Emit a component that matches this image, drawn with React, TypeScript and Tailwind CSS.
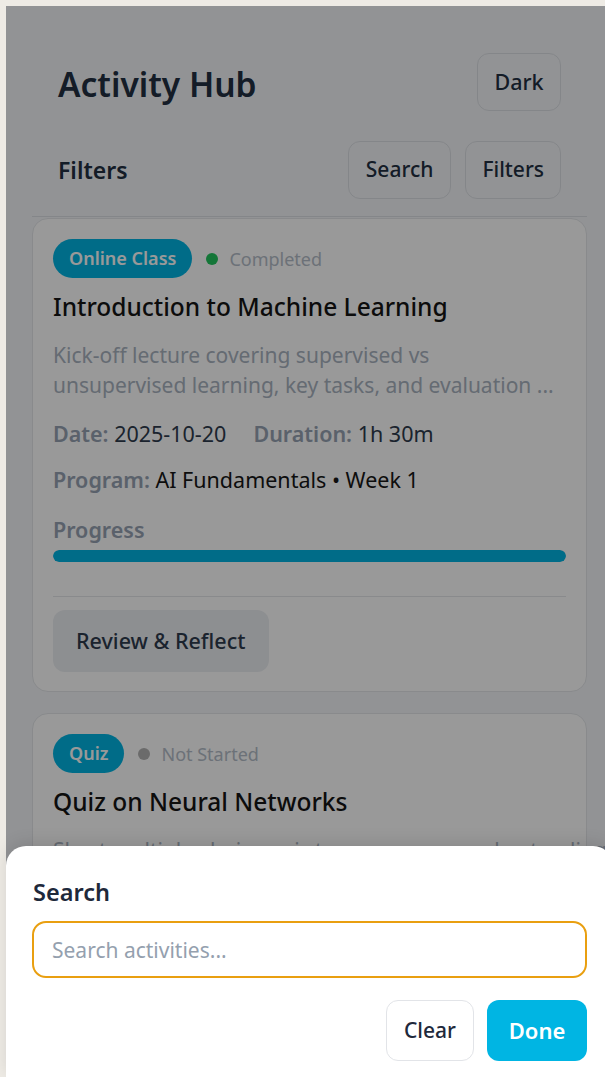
import React from "react";

type Activity = {
  kind: string;
  status: string;
  statusDot: string;
  title: string;
  summary: [string, string];
  date: string;
  duration: string;
  program: string;
  progress: number;
  action: string;
};

const activities: Activity[] = [
  {
    kind: "Online Class",
    status: "Completed",
    statusDot: "bg-[#22c55e]",
    title: "Introduction to Machine Learning",
    summary: [
      "Kick-off lecture covering supervised vs",
      "unsupervised learning, key tasks, and evaluation ...",
    ],
    date: "2025-10-20",
    duration: "1h 30m",
    program: "AI Fundamentals • Week 1",
    progress: 100,
    action: "Review & Reflect",
  },
  {
    kind: "Quiz",
    status: "Not Started",
    statusDot: "bg-[#b3b3b3]",
    title: "Quiz on Neural Networks",
    summary: [
      "Short multiple-choice quiz to assess your understanding",
      "of neural network basics and backpropagation ...",
    ],
    date: "2025-10-24",
    duration: "20m",
    program: "AI Fundamentals • Week 2",
    progress: 0,
    action: "Start Quiz",
  },
];

function ActivityCard({ item }: { item: Activity }) {
  return (
    <article className="flex flex-col rounded-[16px] border border-[#e4e6ea] bg-white px-[20px] pt-[20px] pb-[19px]">
      <div className="flex items-center gap-[14px]">
        <span className="rounded-full bg-[#00b5e3] px-[16px] py-[8px] text-[18px] leading-[23px] font-semibold text-white">
          {item.kind}
        </span>
        <span className="flex items-center gap-[11px] text-[18px] leading-[24px] text-[#b4bdc9]">
          <span className={`h-[12px] w-[12px] rounded-full ${item.statusDot}`} />
          {item.status}
        </span>
      </div>
      <h3 className="mt-[14px] text-[24.5px] leading-[30px] font-medium text-[#141414]">
        {item.title}
      </h3>
      <p className="mt-[18px] text-[21px] leading-[30px] whitespace-nowrap text-[#a8b2bf]">
        {item.summary[0]}
        <br />
        {item.summary[1]}
      </p>
      <div className="mt-[19px] flex gap-[27px] text-[21.5px] leading-[30px] text-[#2e3b4d]">
        <span>
          <span className="font-semibold text-[#96a2b2]">Date:</span> {item.date}
        </span>
        <span>
          <span className="font-semibold text-[#96a2b2]">Duration:</span> {item.duration}
        </span>
      </div>
      <div className="mt-[16px] text-[21.5px] leading-[30px] text-[#161616]">
        <span className="font-semibold text-[#96a2b2]">Program:</span> {item.program}
      </div>
      <div className="mt-[20px] text-[21.5px] leading-[30px] font-semibold text-[#96a2b2]">
        Progress
      </div>
      <div className="mt-[5px] h-[12px] w-full overflow-hidden rounded-full bg-[#e5e7eb]">
        <div className="h-full rounded-full bg-[#00b5e3]" style={{ width: `${item.progress}%` }} />
      </div>
      <div className="mt-[34px] border-t border-[#e4e6ea] pt-[13px]">
        <button className="h-[62px] rounded-[12px] bg-[#eceef2] px-[23px] text-[21.5px] font-medium text-[#2e3b4d]">
          {item.action}
        </button>
      </div>
    </article>
  );
}

export default function App() {
  return (
    <div
      className="relative h-[1077px] overflow-hidden bg-[#eeebe5] pt-[6px] pl-[6px]"
      style={{ fontFamily: '"Noto Sans", "Open Sans", Arial, sans-serif' }}
    >
      <div className="relative h-full w-[607px] bg-[#f4f6f9] px-[26px]">
        <header className="border-b border-[#dcdfe4] pb-[17px]">
          <div className="flex items-center justify-between px-[26px] pt-[47px]">
            <h1 className="pt-[4px] text-[33.5px] leading-[40px] font-semibold text-[#222f42]">
              Activity Hub
            </h1>
            <button className="h-[58px] w-[84px] rounded-[12px] border border-[#dde0e5] text-[21.5px] font-medium text-[#222f42]">
              Dark
            </button>
          </div>
          <div className="mt-[30px] flex items-center justify-between px-[26px]">
            <h2 className="text-[23px] leading-[30px] font-semibold text-[#222f42]">Filters</h2>
            <div className="flex gap-[14px]">
              <button className="h-[58px] rounded-[12px] border border-[#dde0e5] px-[17px] text-[21px] font-medium text-[#222f42]">
                Search
              </button>
              <button className="h-[58px] rounded-[12px] border border-[#dde0e5] px-[16px] text-[21px] font-medium text-[#222f42]">
                Filters
              </button>
            </div>
          </div>
        </header>

        <div className="mt-[1px] flex flex-col gap-[21px]">
          {activities.map((a) => (
            <ActivityCard key={a.title} item={a} />
          ))}
        </div>

        <div className="absolute inset-0 bg-black/40" />

        <div className="absolute inset-x-0 bottom-0 rounded-t-[20px] bg-white px-[26px] pt-[31px] pb-[16px] shadow-[0_-4px_16px_rgba(0,0,0,0.1)]">
          <div className="pl-[1px] text-[23.5px] leading-[30px] font-semibold text-[#1e293b]">Search</div>
          <input
            className="mt-[14px] h-[57px] w-full rounded-[14px] border-2 border-[#e99f10] bg-white px-[18px] text-[21px] text-[#1e293b] outline-none placeholder:text-[#94a0ae]"
            placeholder="Search activities..."
          />
          <div className="mt-[22px] flex justify-end gap-[13px]">
            <button className="h-[61px] w-[88px] rounded-[12px] border border-[#e2e4e8] bg-white text-[21px] font-medium text-[#1e293b]">
              Clear
            </button>
            <button className="h-[61px] w-[100px] rounded-[12px] bg-[#00b5e3] text-[22px] font-semibold text-white">
              Done
            </button>
          </div>
        </div>
      </div>
    </div>
  );
}
